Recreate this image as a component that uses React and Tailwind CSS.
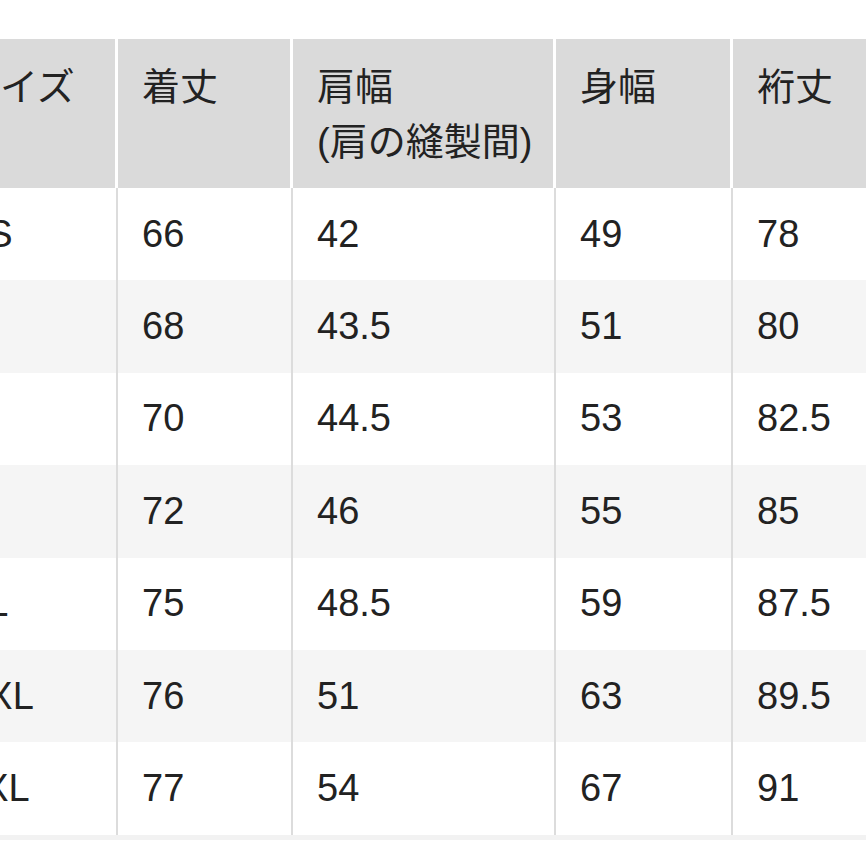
const headers = [["サイズ"], ["着丈"], ["肩幅", "(肩の縫製間)"], ["身幅"], ["裄丈"]];

const rows = [
  ["XS", "66", "42", "49", "78"],
  ["S", "68", "43.5", "51", "80"],
  ["M", "70", "44.5", "53", "82.5"],
  ["L", "72", "46", "55", "85"],
  ["XL", "75", "48.5", "59", "87.5"],
  ["XXL", "76", "51", "63", "89.5"],
  ["3XL", "77", "54", "67", "91"],
];

const widths = ["w-[180px]", "w-[175px]", "w-[263px]", "w-[177px]", "w-[180px]"];

export default function App() {
  return (
    <div
      className="w-[866px] h-[866px] overflow-hidden bg-white text-[#222] text-[38px]"
      style={{ fontFamily: '"Liberation Sans", "Noto Sans CJK JP", sans-serif' }}
    >
      <div className="mt-[39px] ml-[-62px] w-max border-b-[5px] border-[#f2f2f2]">
        <div className="flex h-[149px] bg-[#dadada]">
          {headers.map((h, i) => (
            <div
              key={i}
              className={`${widths[i]} shrink-0 border-r-[3px] border-white pl-[24px] pt-[21px] leading-[55px]`}
            >
              {h.map((line) => (
                <div key={line}>{line}</div>
              ))}
            </div>
          ))}
        </div>
        {rows.map((r, ri) => (
          <div
            key={r[0]}
            className={`flex h-[92.4px] ${ri % 2 === 1 ? "bg-[#f5f5f5]" : "bg-white"}`}
          >
            {r.map((v, ci) => (
              <div
                key={ci}
                className={`${widths[ci]} shrink-0 flex items-center border-r-2 border-[#dcdcdc] pl-[24px]`}
              >
                {v}
              </div>
            ))}
          </div>
        ))}
      </div>
    </div>
  );
}
